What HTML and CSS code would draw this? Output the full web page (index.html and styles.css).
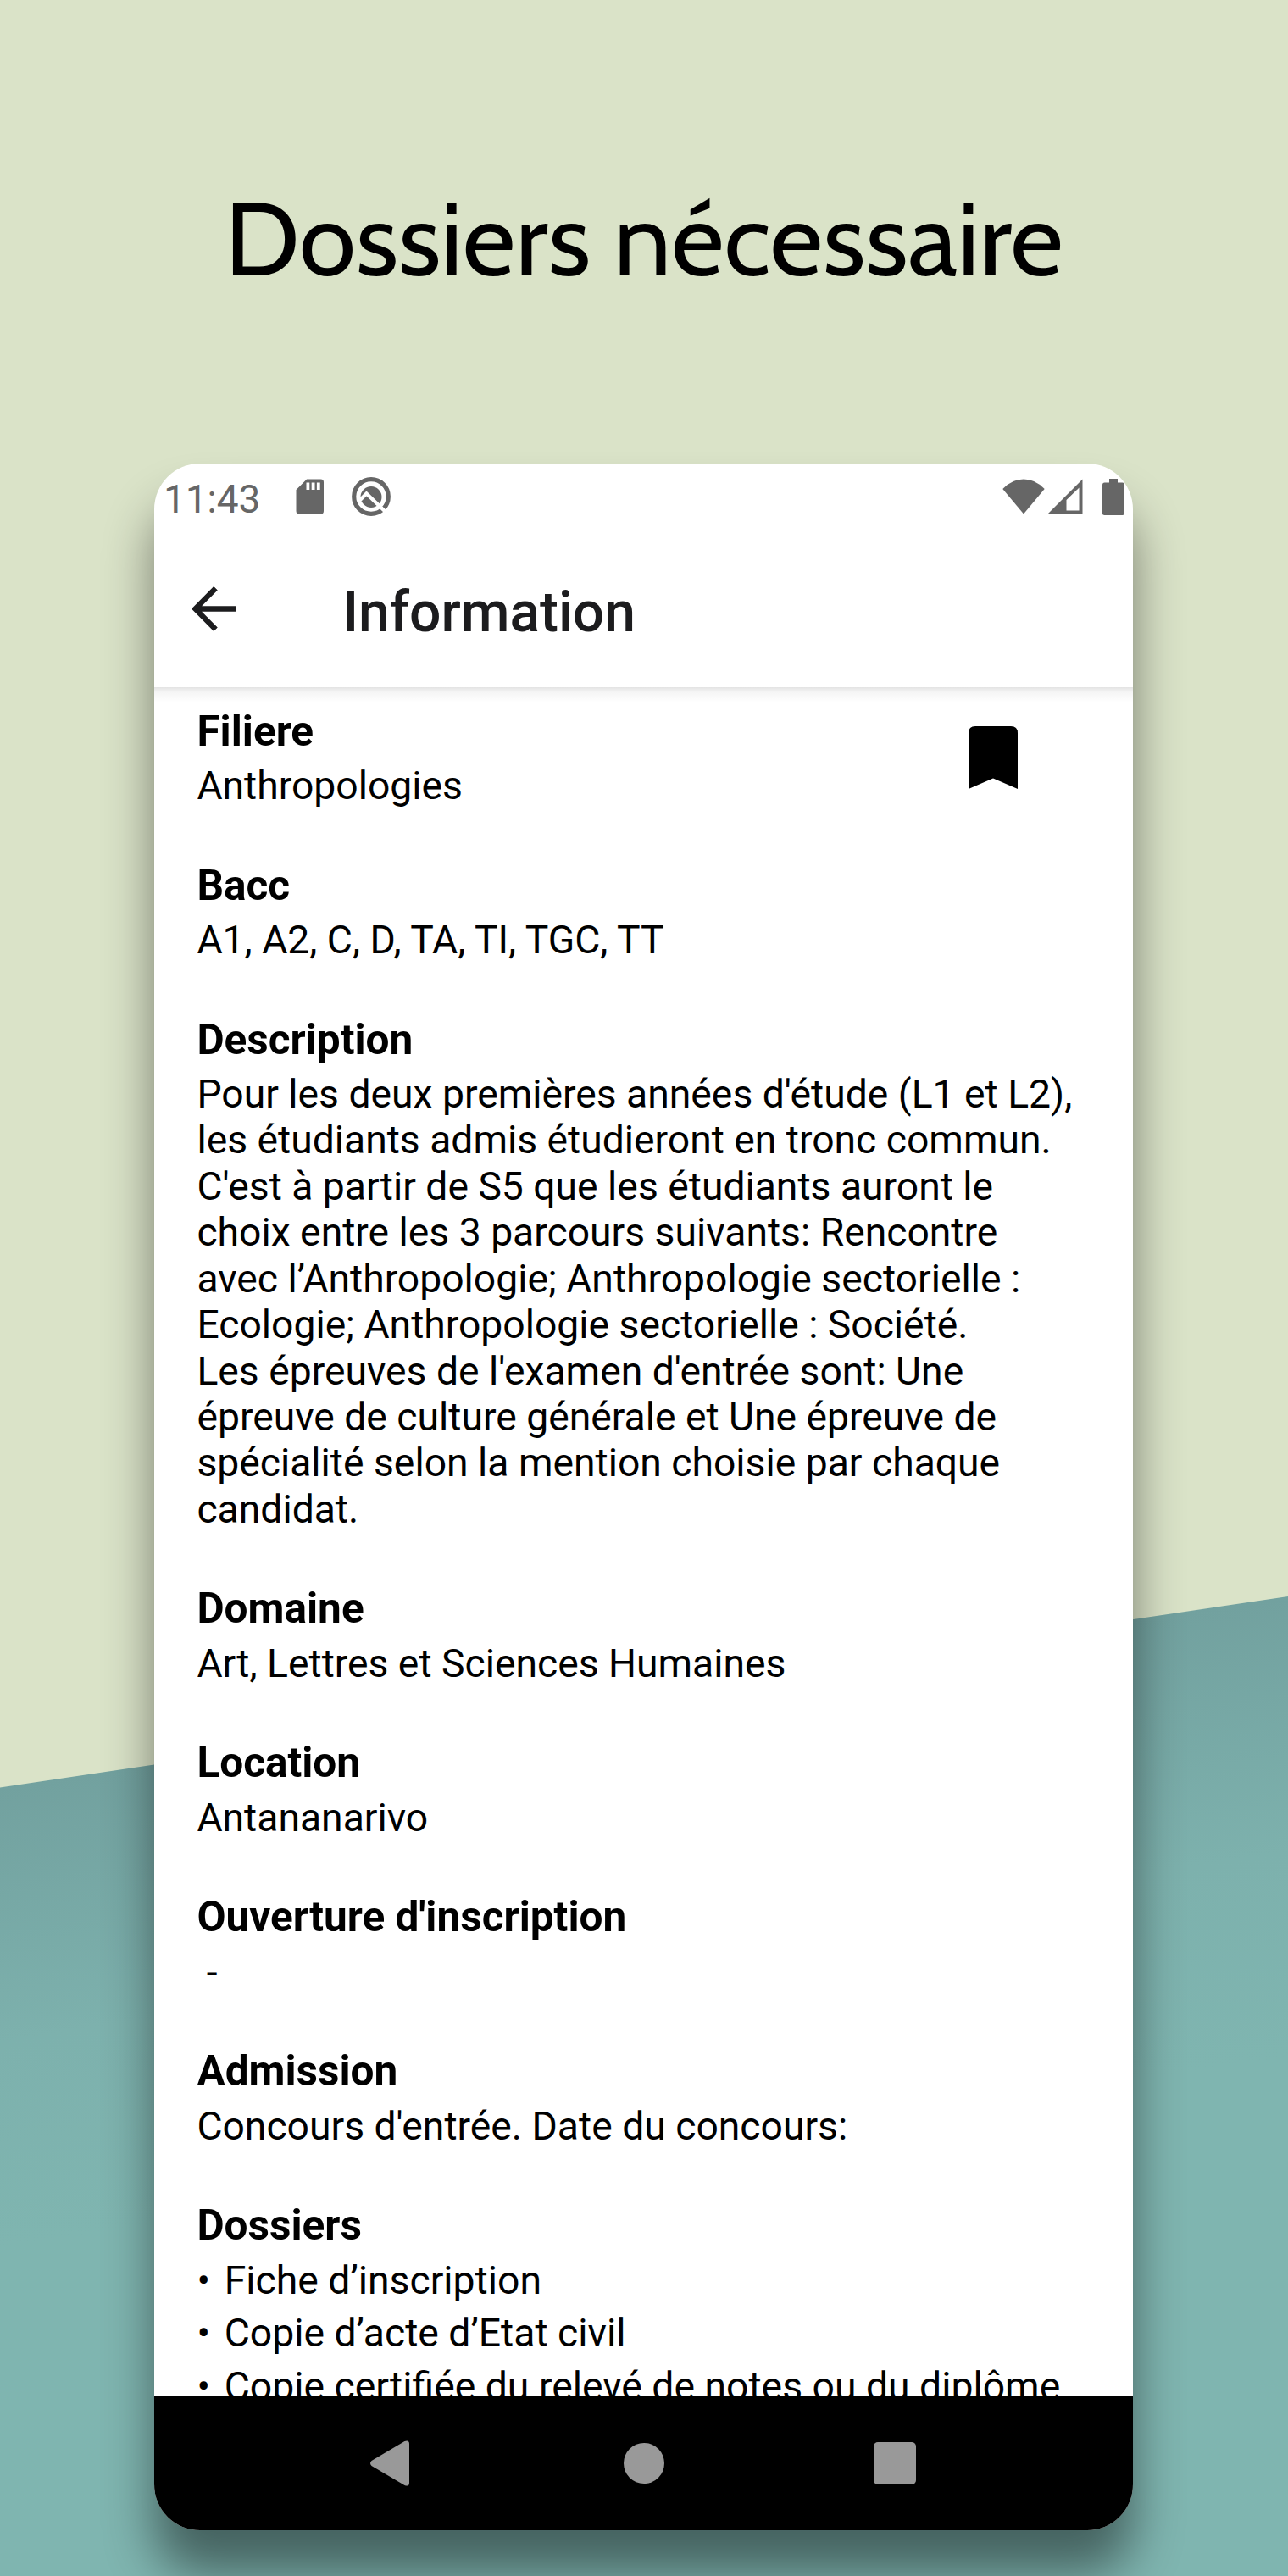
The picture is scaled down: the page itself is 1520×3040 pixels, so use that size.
FILE: index.html
```html
<!DOCTYPE html>
<html lang="fr">
<head>
<meta charset="utf-8">
<title>Dossiers nécessaire</title>
<link rel="stylesheet" href="styles.css">
</head>
<body>
<div class="poster">
  <div class="wave"></div>
  <h1 class="headline">Dossiers nécessaire</h1>
  <div class="phone">
    <div class="status">
      <span class="clock">11:43</span>
      <svg class="sd" width="34" height="42" viewBox="0 0 34 42"><path fill="#666" fill-rule="evenodd" d="M13 .5H29.500Q33 .5 33 4V38Q33 41.500 29.500 41.500H4Q.5 41.500 .5 38V13ZM12.500 4.500V13H16.300V4.500ZM18.700 4.500V13H22.500V4.500ZM24.900 4.500V13H28.700V4.500Z"/></svg>
      <svg class="ring" width="46" height="46" viewBox="0 0 46 46"><circle cx="23" cy="23" r="20.300" fill="none" stroke="#666" stroke-width="5.200"/><circle cx="23" cy="23.500" r="12.500" fill="#666"/><path d="M10 27 17.500 19.500 41 42" fill="none" stroke="#fff" stroke-width="4.200"/></svg>
      <span class="spacer"></span>
      <svg class="wifi" width="50" height="42" viewBox="0 0 50 42"><path fill="#666" d="M.3 12Q11 .5 25 .5T49.700 12L25 41.500Z"/></svg>
      <svg class="signal" width="42" height="42" viewBox="0 0 42 42"><path fill="#666" fill-rule="evenodd" d="M.5 41.500 41.500.5V41.500ZM22.500 37.500H37.500V10.500L22.500 25Z"/></svg>
      <svg class="battery" width="26" height="43" viewBox="0 0 26 43"><path fill="#666" d="M8 0H18V4.500H23.500Q26 4.500 26 7V40.500Q26 43 23.500 43H2.500Q0 43 0 40.500V7Q0 4.500 2.500 4.500H8Z"/></svg>
    </div>
    <div class="appbar">
      <svg class="back" width="53" height="53" viewBox="0 0 53 53"><path fill="none" stroke="#1c1c1e" stroke-width="6.400" d="M52.500 26.500H6M28.500 2.300 4.400 26.500 28.500 50.700"/></svg>
      <h2 class="title">Information</h2>
    </div>
    <main class="content">
      <section class="item with-mark">
        <div>
          <h3>Filiere</h3>
          <p>Anthropologies</p>
        </div>
        <svg class="bookmark" width="58" height="74" viewBox="0 0 58 74"><path d="M8 0H50Q58 0 58 8V74L29 61.500 0 74V8Q0 0 8 0Z"/></svg>
      </section>
      <section class="item">
        <h3>Bacc</h3>
        <p>A1, A2, C, D, TA, TI, TGC, TT</p>
      </section>
      <section class="item">
        <h3>Description</h3>
        <p>Pour les deux premières années d'étude (L1 et L2),<br>les étudiants admis étudieront en tronc commun.<br>C'est à partir de S5 que les étudiants auront le<br>choix entre les 3 parcours suivants: Rencontre<br>avec l’Anthropologie; Anthropologie sectorielle :<br>Ecologie; Anthropologie sectorielle : Société.<br>Les épreuves de l'examen d'entrée sont: Une<br>épreuve de culture générale et Une épreuve de<br>spécialité selon la mention choisie par chaque<br>candidat.</p>
      </section>
      <section class="item">
        <h3>Domaine</h3>
        <p>Art, Lettres et Sciences Humaines</p>
      </section>
      <section class="item">
        <h3>Location</h3>
        <p>Antananarivo</p>
      </section>
      <section class="item">
        <h3>Ouverture d'inscription</h3>
        <p> -</p>
      </section>
      <section class="item">
        <h3>Admission</h3>
        <p>Concours d'entrée. Date du concours:</p>
      </section>
      <section class="item">
        <h3>Dossiers</h3>
        <ul>
          <li><span class="dot">•</span>Fiche d’inscription</li>
          <li><span class="dot">•</span>Copie d’acte d’Etat civil</li>
          <li><span class="dot">•</span>Copie certifiée du relevé de notes ou du diplôme</li>
        </ul>
      </section>
    </main>
    <nav class="navbar">
      <svg class="nav-back" width="46" height="54" viewBox="0 0 46 54"><path fill="#999" d="M1.500 24 40.500.9Q46-1 46 4V50Q46 55 40.500 53.100L1.500 30Q-1.500 27 1.500 24Z"/></svg>
      <svg class="nav-home" width="48" height="48" viewBox="0 0 48 48"><circle cx="24" cy="24" r="24" fill="#999"/></svg>
      <svg class="nav-recent" width="50" height="50" viewBox="0 0 50 50"><rect width="50" height="50" rx="5" fill="#999"/></svg>
    </nav>
  </div>
</div>
</body>
</html>
```
FILE: styles.css
```css
* { box-sizing: border-box; margin: 0; padding: 0; }
body { font-family: Roboto, sans-serif; }
svg { display: block; flex: none; }

.poster {
  position: relative;
  width: 1520px;
  height: 3040px;
  overflow: hidden;
  background: #dae3c8;
}
/* slanted teal backdrop behind the phone */
.wave {
  position: absolute;
  left: 0;
  right: 0;
  top: 1884px;
  bottom: 0;
  background: linear-gradient(171.6deg, #72a19f 222px, #7db1ad 520px, #7fb5b0 760px);
  clip-path: polygon(0 225.500px, 100% 0, 100% 100%, 0 100%);
}
.headline {
  position: relative;
  height: 547px;
  padding-top: 209px;
  font: 400 121.500px/146px Cabin, Lato, sans-serif;
  text-align: center;
  color: #000;
}
.phone {
  position: relative;
  display: flex;
  flex-direction: column;
  width: 1155px;
  height: 2439px;
  margin: 0 0 0 182.400px;
  border-radius: 54px;
  overflow: hidden;
  background: #fff;
  box-shadow: 0 50px 58px rgba(0, 0, 0, .46);
}
.status {
  display: flex;
  align-items: center;
  flex: none;
  height: 78px;
  padding: 0 10.500px;
  color: #666;
}
.clock { width: 156.500px; padding-top: 6px; font-size: 46px; line-height: 54px; }
.ring { margin-left: 32px; }
.spacer { flex: 1; }
.signal { margin-left: 3px; }
.battery { margin-left: 23px; }

.appbar {
  display: flex;
  align-items: center;
  flex: none;
  height: 186px;
  padding-left: 43.500px;
}
.title {
  margin: 9px 0 0 125.500px;
  font-size: 66px;
  font-weight: 500;
  line-height: 78px;
  color: #1c1c1e;
}
.content {
  display: flex;
  flex-direction: column;
  gap: 61.400px;
  height: 2016.500px;
  flex: none;
  padding: 22.700px 50px 0;
  overflow: hidden;
  color: #000;
  background: linear-gradient(rgba(0, 0, 0, .11), rgba(0, 0, 0, .04) 6px, transparent 18px) no-repeat;
}
.item { flex: none; }
h3 { margin-bottom: 8.200px; font-size: 49.550px; line-height: 58.200px; font-weight: 700; }
p { margin-bottom: -.2px; font-size: 46.250px; line-height: 54.400px; white-space: pre; }
.with-mark { display: flex; justify-content: space-between; }
.bookmark { margin: 23px 86.500px 0 0; }
ul { display: flex; flex-direction: column; gap: 8.300px; list-style: none; }
li { display: flex; font-size: 46.300px; line-height: 54.400px; white-space: nowrap; }
.dot { flex: none; width: 32.300px; }

.navbar {
  display: flex;
  align-items: center;
  flex: 1;
  padding-left: 254.500px;
  background: #000;
}
.nav-home { margin-left: 253px; }
.nav-recent { margin-left: 247.500px; }
```
